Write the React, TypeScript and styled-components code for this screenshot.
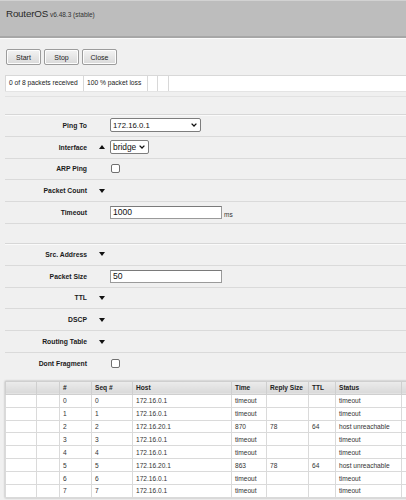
import React from "react";
import styled, { createGlobalStyle } from "styled-components";

const Global = createGlobalStyle`
  html, body { margin: 0; padding: 0; background: #f0f0f0; overflow: hidden; }
  body { font-family: "Liberation Sans", Arial, sans-serif; color: #222; }
`;

const Page = styled.div`
  width: 406px;
  height: 500px;
  overflow: hidden;
  background: #f0f0f0;
`;

const Header = styled.header`
  box-sizing: border-box;
  height: 38px;
  background: #bdbdbd;
  border-top: 1px solid #d2d2d2;
  border-bottom: 2px solid #a7a7a7;
  box-shadow: 0 1px 0 #fbfbfb;
  display: flex;
  align-items: baseline;
  padding: 7px 0 0 6px;
`;

const Title = styled.span`
  font-size: 9.8px;
  color: #2a2a2a;
  letter-spacing: -0.2px;
`;

const Version = styled.span`
  font-size: 6.5px;
  color: #333;
  margin-left: 2px;
`;

const Toolbar = styled.div`
  display: flex;
  gap: 3px;
  padding: 11px 0 0 6px;
`;

const Button = styled.button`
  box-sizing: border-box;
  width: 35px;
  height: 16px;
  padding: 0;
  border: 1px solid #9c9c9c;
  border-radius: 2px;
  background: linear-gradient(#f3f3f3, #d9d9d9);
  box-shadow: inset 0 0 0 1px #fdfdfd;
  font-family: "Liberation Sans", Arial, sans-serif;
  font-size: 7px;
  color: #222;
`;

const StatusArea = styled.div`
  margin: 10px 0 0 5px;
  padding-bottom: 4px;
  border-bottom: 1px solid #e2e2e2;
`;

const StatusBar = styled.div`
  display: flex;
  height: 15px;
  border-top: 1px solid #d8d8d8;
  border-bottom: 1px solid #e4e4e4;
`;

const StatusCell = styled.div<{ $w?: number; $grow?: boolean }>`
  box-sizing: border-box;
  ${(p) => (p.$w ? `width: ${p.$w}px;` : "")}
  ${(p) => (p.$grow ? "flex: 1;" : "")}
  background: #fff;
  border-left: 1px solid #d8d8d8;
  padding: 0 3px;
  font-size: 6.7px;
  line-height: 14px;
  color: #222;
  white-space: nowrap;
`;

const Section = styled.div<{ $top: number }>`
  margin: ${(p) => p.$top}px 0 0 5px;
  border-top: 1px solid #d7d7d7;
  box-shadow: inset 0 1px 0 #fafafa;
`;

const Row = styled.div<{ $last?: boolean }>`
  display: grid;
  grid-template-columns: 82px 23px 1fr;
  align-items: center;
  height: 20.8px;
  border-bottom: 1px solid ${(p) => (p.$last ? "transparent" : "#dadada")};
`;

const Label = styled.div`
  text-align: right;
  font-weight: bold;
  font-size: 6.8px;
  color: #1a1a1a;
  white-space: nowrap;
`;

const Indicator = styled.div`
  display: flex;
  align-items: center;
  padding-left: 12px;
`;

const Control = styled.div`
  display: flex;
  align-items: center;
`;

const Select = styled.div<{ $w: number; $fs: number }>`
  box-sizing: border-box;
  width: ${(p) => p.$w}px;
  height: 14px;
  border: 1px solid #7d7d7d;
  border-radius: 2px;
  background: #fff;
  display: flex;
  align-items: center;
  justify-content: space-between;
  padding: 0 3px 0 2px;
  font-size: ${(p) => p.$fs}px;
  color: #111;
`;

const Input = styled.div`
  box-sizing: border-box;
  width: 112px;
  height: 13px;
  border: 1px solid #9a9a9a;
  border-top-color: #7a7a7a;
  background: #fff;
  padding: 0 2px;
  font-size: 8.6px;
  line-height: 11px;
  color: #111;
`;

const Unit = styled.span`
  font-size: 6.5px;
  margin-left: 2px;
  margin-top: 3px;
  color: #333;
`;

const Checkbox = styled.div`
  box-sizing: border-box;
  width: 9px;
  height: 9px;
  margin-left: 1px;
  border: 1px solid #6f6f6f;
  border-radius: 2px;
  background: #fff;
`;

const TableWrap = styled.div`
  margin: 6px 0 0 5px;
  width: 440px;
  box-shadow: 0 0 2px rgba(0, 0, 0, 0.3);
  background: #fff;
`;

const Table = styled.table`
  border-collapse: collapse;
  table-layout: fixed;
  width: 440px;
`;

const Th = styled.th<{ $w?: number }>`
  ${(p) => (p.$w ? `width: ${p.$w}px;` : "")}
  height: 13px;
  padding: 0 3px;
  box-sizing: border-box;
  background: linear-gradient(#ececec, #d9d9d9);
  border: 1px solid #cfcfcf;
  font-size: 6.6px;
  font-weight: bold;
  text-align: left;
  color: #222;
  white-space: nowrap;
`;

const Td = styled.td`
  height: 12.9px;
  padding: 0 3px;
  box-sizing: border-box;
  border: 1px solid #dadada;
  font-size: 6.6px;
  color: #333;
  white-space: nowrap;
  overflow: hidden;
`;

const Down = () => (
  <svg width="6" height="4" viewBox="0 0 6 4">
    <path d="M0 0 L6 0 L3 4 Z" fill="#111" />
  </svg>
);

const Up = () => (
  <svg width="6" height="4" viewBox="0 0 6 4">
    <path d="M0 4 L6 4 L3 0 Z" fill="#111" />
  </svg>
);

const Chevron = () => (
  <svg width="6" height="4" viewBox="0 0 6 4">
    <path d="M0.6 0.6 L3 3 L5.4 0.6" fill="none" stroke="#111" strokeWidth="1.3" />
  </svg>
);

type Ping = { seq: number; host: string; time: string; size: string; ttl: string; status: string };

const pings: Ping[] = [
  { seq: 0, host: "172.16.0.1", time: "timeout", size: "", ttl: "", status: "timeout" },
  { seq: 1, host: "172.16.0.1", time: "timeout", size: "", ttl: "", status: "timeout" },
  { seq: 2, host: "172.16.20.1", time: "870", size: "78", ttl: "64", status: "host unreachable" },
  { seq: 3, host: "172.16.0.1", time: "timeout", size: "", ttl: "", status: "timeout" },
  { seq: 4, host: "172.16.0.1", time: "timeout", size: "", ttl: "", status: "timeout" },
  { seq: 5, host: "172.16.20.1", time: "863", size: "78", ttl: "64", status: "host unreachable" },
  { seq: 6, host: "172.16.0.1", time: "timeout", size: "", ttl: "", status: "timeout" },
  { seq: 7, host: "172.16.0.1", time: "timeout", size: "", ttl: "", status: "timeout" },
];

export default function App() {
  return (
    <Page>
      <Global />
      <Header>
        <Title>RouterOS</Title>
        <Version>v6.48.3 (stable)</Version>
      </Header>
      <Toolbar>
        <Button>Start</Button>
        <Button>Stop</Button>
        <Button>Close</Button>
      </Toolbar>
      <StatusArea>
        <StatusBar>
          <StatusCell $w={78}>0 of 8 packets received</StatusCell>
          <StatusCell $w={64}>100 % packet loss</StatusCell>
          <StatusCell $w={10} />
          <StatusCell $w={11} />
          <StatusCell $grow />
        </StatusBar>
      </StatusArea>

      <Section $top={17}>
        <Row>
          <Label>Ping To</Label>
          <Indicator />
          <Control>
            <Select $w={91} $fs={7.8}>
              <span>172.16.0.1</span>
              <Chevron />
            </Select>
          </Control>
        </Row>
        <Row>
          <Label>Interface</Label>
          <Indicator>
            <Up />
          </Indicator>
          <Control>
            <Select $w={39} $fs={8.4}>
              <span>bridge</span>
              <Chevron />
            </Select>
          </Control>
        </Row>
        <Row>
          <Label>ARP Ping</Label>
          <Indicator />
          <Control>
            <Checkbox />
          </Control>
        </Row>
        <Row>
          <Label>Packet Count</Label>
          <Indicator>
            <Down />
          </Indicator>
          <Control />
        </Row>
        <Row>
          <Label>Timeout</Label>
          <Indicator />
          <Control>
            <Input>1000</Input>
            <Unit>ms</Unit>
          </Control>
        </Row>
      </Section>

      <Section $top={19}>
        <Row>
          <Label>Src. Address</Label>
          <Indicator>
            <Down />
          </Indicator>
          <Control />
        </Row>
        <Row>
          <Label>Packet Size</Label>
          <Indicator />
          <Control>
            <Input>50</Input>
          </Control>
        </Row>
        <Row>
          <Label>TTL</Label>
          <Indicator>
            <Down />
          </Indicator>
          <Control />
        </Row>
        <Row>
          <Label>DSCP</Label>
          <Indicator>
            <Down />
          </Indicator>
          <Control />
        </Row>
        <Row>
          <Label>Routing Table</Label>
          <Indicator>
            <Down />
          </Indicator>
          <Control />
        </Row>
        <Row $last>
          <Label>Dont Fragment</Label>
          <Indicator />
          <Control>
            <Checkbox />
          </Control>
        </Row>
      </Section>

      <TableWrap>
        <Table>
          <thead>
            <tr>
              <Th $w={31} />
              <Th $w={23} />
              <Th $w={32}>#</Th>
              <Th $w={41}>Seq #</Th>
              <Th $w={99}>Host</Th>
              <Th $w={35}>Time</Th>
              <Th $w={42}>Reply Size</Th>
              <Th $w={27}>TTL</Th>
              <Th $w={66}>Status</Th>
              <Th />
            </tr>
          </thead>
          <tbody>
            {pings.map((p) => (
              <tr key={p.seq}>
                <Td />
                <Td />
                <Td>{p.seq}</Td>
                <Td>{p.seq}</Td>
                <Td>{p.host}</Td>
                <Td>{p.time}</Td>
                <Td>{p.size}</Td>
                <Td>{p.ttl}</Td>
                <Td>{p.status}</Td>
                <Td />
              </tr>
            ))}
          </tbody>
        </Table>
      </TableWrap>
    </Page>
  );
}
